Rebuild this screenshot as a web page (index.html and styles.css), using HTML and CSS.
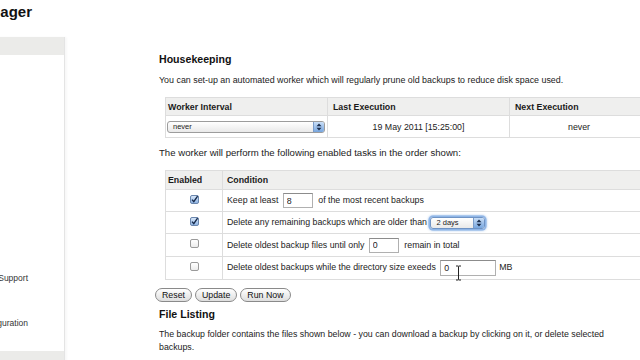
FILE: index.html
```html
<!DOCTYPE html>
<html>
<head>
<meta charset="utf-8">
<title>Backup Manager</title>
<link rel="stylesheet" href="styles.css">
</head>
<body>
<div class="page">
  <header class="top"><h1 class="title">Backup Manager</h1></header>
  <div class="layout">
    <nav class="sidebar">
      <div class="nav-band"></div>
      <ul class="nav">
        <li class="nav-item">Get Support</li>
        <li class="nav-item">Configuration</li>
      </ul>
      <div class="nav-band"></div>
    </nav>
    <main class="content">
      <h2 class="heading">Housekeeping</h2>
      <p class="text intro">You can set-up an automated worker which will regularly prune old backups to reduce disk space used.</p>
      <table class="grid sched">
        <colgroup><col class="c-interval"><col class="c-last"><col></colgroup>
        <tr class="head-row"><th class="first">Worker Interval</th><th>Last Execution</th><th>Next Execution</th></tr>
        <tr class="data-row">
          <td class="first">
            <span class="select wide"><span class="select-label">never</span><span class="select-arrows"><svg width="6" height="8" viewBox="0 0 6 8"><path d="M3 0.5 L5.5 3.2 H0.5 Z M3 7.5 L5.5 4.8 H0.5 Z" fill="#1d2f4d"/></svg></span></span>
          </td>
          <td class="center">19 May 2011 [15:25:00]</td>
          <td class="center">never</td>
        </tr>
      </table>
      <p class="text lead">The worker will perform the following enabled tasks in the order shown:</p>
      <table class="grid tasks">
        <colgroup><col class="c-enabled"><col></colgroup>
        <tr class="head-row t-head"><th class="first">Enabled</th><th class="cond">Condition</th></tr>
        <tr class="r1">
          <td class="center"><span class="check on"><svg width="9" height="9" viewBox="0 0 9 9"><path d="M2 4.6 L3.8 6.6 L7.6 1.2" fill="none" stroke="#16294a" stroke-width="1.4"/></svg></span></td>
          <td class="cond">Keep at least <input class="field w30" type="text" value="8"> of the most recent backups</td>
        </tr>
        <tr class="r2">
          <td class="center"><span class="check on"><svg width="9" height="9" viewBox="0 0 9 9"><path d="M2 4.6 L3.8 6.6 L7.6 1.2" fill="none" stroke="#16294a" stroke-width="1.4"/></svg></span></td>
          <td class="cond">Delete any remaining backups which are older than <span class="select small focus"><span class="select-label">2 days</span><span class="select-arrows"><svg width="6" height="8" viewBox="0 0 6 8"><path d="M3 0.5 L5.5 3.2 H0.5 Z M3 7.5 L5.5 4.8 H0.5 Z" fill="#1d2f4d"/></svg></span></span></td>
        </tr>
        <tr class="r3">
          <td class="center"><span class="check"></span></td>
          <td class="cond">Delete oldest backup files until only <input class="field w30" type="text" value="0"> remain in total</td>
        </tr>
        <tr class="r4">
          <td class="center"><span class="check"></span></td>
          <td class="cond">Delete oldest backups while the directory size exeeds <span class="field-wrap"><input class="field w56 tall" type="text" value="0"><svg class="ibeam" width="7" height="16" viewBox="0 0 7 16"><path d="M1 1 H3 Q3.5 1.5 4 1 H6 M3.5 1.5 V14.5 M1 15 H3 Q3.5 14.5 4 15 H6" fill="none" stroke="#222" stroke-width="1"/></svg></span>MB</td>
        </tr>
      </table>
      <div class="actions">
        <button class="btn" type="button">Reset</button>
        <button class="btn" type="button">Update</button>
        <button class="btn" type="button">Run Now</button>
      </div>
      <h2 class="heading listing">File Listing</h2>
      <p class="text files">The backup folder contains the files shown below - you can download a backup by clicking on it, or delete selected backups.</p>
    </main>
  </div>
</div>
</body>
</html>
```
FILE: styles.css
```css
html, body {
  margin: 0;
  padding: 0;
  background: #fff;
  overflow: hidden;
}
body {
  width: 640px;
  height: 360px;
  font-family: "Liberation Sans", Arial, Helvetica, sans-serif;
  color: #222;
}
.page {
  margin-left: -120px;
  width: 800px;
}
.top {
  height: 37px;
  box-sizing: border-box;
  padding: 4px 0 0 32px;
}
.title {
  margin: 0;
  font-size: 15px;
  line-height: 16px;
  font-weight: bold;
  color: #111;
}
.layout {
  display: flex;
  align-items: flex-start;
}
.sidebar {
  flex: none;
  width: 185px;
  height: 330px;
  box-sizing: border-box;
  border-right: 1px solid #e4e4e4;
  box-shadow: 2px 0 2px rgba(0,0,0,0.03);
  display: flex;
  flex-direction: column;
}
.nav-band {
  height: 18px;
  background: #ebebe9;
  flex: none;
}
.nav {
  list-style: none;
  margin: 201px 0 5px;
  padding: 0 36px 0 0;
  text-align: right;
  font-size: 8.5px;
  color: #333;
}
.nav-item {
  height: 45px;
  line-height: 45px;
}
.content {
  flex: none;
  width: 490px;
  padding: 16px 0 0 94px;
}
.heading {
  margin: 0;
  font-size: 10.6px;
  line-height: 13px;
  font-weight: bold;
  color: #111;
}
.text {
  font-size: 9.6px;
  line-height: 12px;
  margin: 0;
}
.intro {
  margin-top: 8px;
  font-size: 8.9px;
}
.lead { margin-top: 9px; }
.grid {
  border-collapse: collapse;
  margin-left: 6px;
  width: 484px;
  font-size: 8.8px;
  table-layout: fixed;
}
.sched { margin-top: 11px; }
.tasks { margin-top: 11px; }
.c-interval { width: 162px; }
.c-last { width: 182px; }
.c-enabled { width: 57px; }
.grid th {
  background: #efefee;
  text-align: left;
  font-weight: bold;
  padding: 0 5px;
  border: 1px solid #dddddd;
  height: 17px;
  color: #1a1a1a;
}
.grid th.first { padding-left: 2px; }
.grid td {
  border: 1px solid #dddddd;
  padding: 0 4px;
}
.grid td.first { padding-left: 1px; }
.grid .cond { padding-left: 4px; }
.data-row td { height: 21px; }
.t-head th { height: 18px; }
.r1 td, .r2 td { height: 21px; }
.r3 td { height: 22px; }
.r4 td { height: 22px; }
.center { text-align: center; }

.select {
  display: inline-flex;
  align-items: center;
  box-sizing: border-box;
  height: 12px;
  border: 1px solid #9c9c9c;
  border-radius: 3px;
  background: linear-gradient(#ffffff, #e9e9e9);
  font-size: 7.5px;
  color: #222;
  vertical-align: middle;
  overflow: hidden;
}
.select.wide { width: 158px; }
.select.small { width: 55px; margin-left: 1px; }
.select.focus {
  box-shadow: 0 0 0 1.5px #8fb5e6, 0 0 2px 2px rgba(110,160,225,0.5);
  border-color: #6f93c4;
}
.select-label {
  flex: 1;
  padding-left: 5px;
  text-align: left;
  line-height: 10px;
}
.select-arrows {
  flex: none;
  width: 10px;
  height: 10px;
  border-left: 1px solid #7b9cc9;
  background: linear-gradient(#c9def7, #77a6df);
  display: flex;
  align-items: center;
  justify-content: center;
}
.check {
  display: inline-block;
  box-sizing: border-box;
  width: 9px;
  height: 9px;
  border: 1px solid #9a9a9a;
  border-radius: 2px;
  background: linear-gradient(#ffffff, #ececec);
  vertical-align: middle;
  position: relative;
  top: -2px;
}
.check.on {
  border-color: #6a86ad;
  background: linear-gradient(#d7e6f8, #8fb4e3);
}
.check svg {
  position: absolute;
  left: -1px;
  top: -1px;
}
.field {
  font: 8.8px "Liberation Sans", Arial, sans-serif;
  color: #222;
  height: 15px;
  box-sizing: border-box;
  border: 1px solid #b0b0b0;
  border-top-color: #8c8c8c;
  background: #fff;
  padding: 0 3px;
  margin: 0 3px 0 2px;
  vertical-align: middle;
  outline: none;
}
.w30 { width: 30px; }
.w56 { width: 56px; }
.tall { height: 16px; }
.field-wrap {
  position: relative;
  display: inline-block;
}
.ibeam {
  position: absolute;
  left: 17px;
  top: 5px;
}
.actions {
  display: flex;
  gap: 3px;
  margin: 8px 0 0 -4px;
}
.btn {
  font: 8.8px "Liberation Sans", Arial, sans-serif;
  color: #111;
  height: 14px;
  line-height: 12px;
  padding: 0 6px;
  border: 1px solid #8a8a8a;
  border-radius: 7px;
  background: linear-gradient(#ffffff, #dedede);
  box-sizing: border-box;
}
.listing { margin-top: 6px; }
.files {
  margin-top: 7px;
  line-height: 13px;
  font-size: 8.8px;
  max-width: 470px;
}
```
